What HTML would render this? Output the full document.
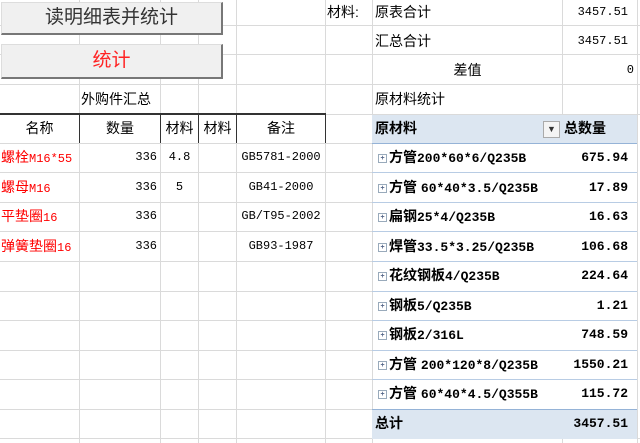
<!DOCTYPE html>
<html><head><meta charset="utf-8"><style>
body{margin:0;width:640px;height:443px;overflow:hidden;background:#fff;position:relative;font-family:"Liberation Sans","Noto Sans CJK SC",sans-serif;font-size:14px;color:#000}
.h{position:absolute;height:1px;background:#dadada}
.v{position:absolute;width:1px;background:#dadada}
.t{position:absolute;white-space:nowrap;line-height:29px;height:29px}
.m{font-family:"Liberation Mono","Noto Sans CJK SC",monospace;font-size:12px}
.p .m,.pm{font-family:"Liberation Mono",monospace;font-size:13px}
.r{color:#f00}
.btn{position:absolute;left:1px;width:219px;background:#f0f0f0;border:1px solid #ddd;border-right:2px solid #777;border-bottom:2px solid #777;text-align:center;font-size:19px}
.b{font-weight:bold}
.pl{position:absolute;left:372px;width:265px;height:1px;background:#b8cce4}
.pi{display:inline-block;width:7px;height:7px;border:1px solid #9ab;margin-right:2px;vertical-align:middle;font-size:7px;line-height:7px;text-align:center;color:#568}
</style></head><body>
<div class="h" style="top:25px;left:0;width:640px"></div>
<div class="h" style="top:54px;left:0;width:640px"></div>
<div class="h" style="top:84px;left:0;width:640px"></div>
<div class="h" style="top:114px;left:325px;width:315px"></div>
<div class="h" style="top:143px;left:0;width:372px"></div>
<div class="h" style="top:172px;left:0;width:372px"></div>
<div class="h" style="top:202px;left:0;width:372px"></div>
<div class="h" style="top:231px;left:0;width:372px"></div>
<div class="h" style="top:261px;left:0;width:372px"></div>
<div class="h" style="top:291px;left:0;width:372px"></div>
<div class="h" style="top:320px;left:0;width:372px"></div>
<div class="h" style="top:350px;left:0;width:372px"></div>
<div class="h" style="top:379px;left:0;width:372px"></div>
<div class="h" style="top:409px;left:0;width:372px"></div>
<div class="h" style="top:438px;left:0;width:640px"></div>
<div class="v" style="left:79px;top:0;height:443px"></div>
<div class="v" style="left:160px;top:0;height:443px"></div>
<div class="v" style="left:198px;top:0;height:443px"></div>
<div class="v" style="left:236px;top:0;height:443px"></div>
<div class="v" style="left:325px;top:0;height:443px"></div>
<div class="v" style="left:372px;top:0;height:443px"></div>
<div class="v" style="left:562px;top:0;height:114px"></div>
<div class="v" style="left:637px;top:0;height:443px"></div>
<div class="v" style="left:562px;top:438px;height:5px"></div>
<div style="position:absolute;top:113px;left:0;width:326px;height:2px;background:#333"></div>
<div style="position:absolute;top:114px;left:79px;width:1px;height:29px;background:#333"></div>
<div style="position:absolute;top:114px;left:160px;width:1px;height:29px;background:#333"></div>
<div style="position:absolute;top:114px;left:198px;width:1px;height:29px;background:#333"></div>
<div style="position:absolute;top:114px;left:236px;width:1px;height:29px;background:#333"></div>
<div style="position:absolute;top:114px;left:325px;width:1px;height:29px;background:#333"></div>
<div class="btn" style="top:2px;height:30px;line-height:30px;color:#333">读明细表并统计</div>
<div class="btn" style="top:44px;height:32px;line-height:32px;color:#f22">统计</div>
<div class="t" style="left:81px;top:85px">外购件汇总</div>
<div class="t" style="left:0;width:79px;top:114px;text-align:center">名称</div>
<div class="t" style="left:80px;width:80px;top:114px;text-align:center">数量</div>
<div class="t" style="left:161px;width:37px;top:114px;text-align:center">材料</div>
<div class="t" style="left:199px;width:37px;top:114px;text-align:center">材料</div>
<div class="t" style="left:237px;width:88px;top:114px;text-align:center">备注</div>
<div class="t r" style="left:1px;top:143px">螺栓<span class="m">M16*55</span></div>
<div class="t m" style="left:80px;width:77px;top:143px;text-align:right">336</div>
<div class="t m" style="left:161px;width:37px;top:143px;text-align:center">4.8</div>
<div class="t m" style="left:237px;width:88px;top:143px;text-align:center">GB5781-2000</div>
<div class="t r" style="left:1px;top:173px">螺母<span class="m">M16</span></div>
<div class="t m" style="left:80px;width:77px;top:173px;text-align:right">336</div>
<div class="t m" style="left:161px;width:37px;top:173px;text-align:center">5</div>
<div class="t m" style="left:237px;width:88px;top:173px;text-align:center">GB41-2000</div>
<div class="t r" style="left:1px;top:202px">平垫圈<span class="m">16</span></div>
<div class="t m" style="left:80px;width:77px;top:202px;text-align:right">336</div>
<div class="t m" style="left:237px;width:88px;top:202px;text-align:center">GB/T95-2002</div>
<div class="t r" style="left:1px;top:232px">弹簧垫圈<span class="m">16</span></div>
<div class="t m" style="left:80px;width:77px;top:232px;text-align:right">336</div>
<div class="t m" style="left:237px;width:88px;top:232px;text-align:center">GB93-1987</div>
<div class="t" style="left:327px;top:-2px">材料:</div>
<div class="t" style="left:375px;top:-2px">原表合计</div>
<div class="t m" style="left:562px;width:66px;top:-2px;text-align:right">3457.51</div>
<div class="t" style="left:375px;top:27px">汇总合计</div>
<div class="t m" style="left:562px;width:66px;top:27px;text-align:right">3457.51</div>
<div class="t" style="left:373px;width:189px;top:56px;text-align:center">差值</div>
<div class="t m" style="left:562px;width:72px;top:56px;text-align:right">0</div>
<div class="t" style="left:375px;top:85px">原材料统计</div>
<div style="position:absolute;left:372px;top:115px;width:265px;height:28px;background:#dce6f1;border-bottom:1px solid #95b3d7"></div>
<div class="t b" style="left:375px;top:114px">原材料</div>
<div style="position:absolute;left:543px;top:121px;width:15px;height:15px;background:#f4f4f4;border:1px solid #aaa;font-size:9px;line-height:15px;text-align:center;color:#333">▼</div>
<div class="t b" style="left:564px;top:114px">总数量</div>
<div class="pl" style="top:172px"></div><div class="pl" style="top:202px"></div><div class="pl" style="top:231px"></div><div class="pl" style="top:261px"></div><div class="pl" style="top:291px"></div><div class="pl" style="top:320px"></div><div class="pl" style="top:350px"></div><div class="pl" style="top:379px"></div>
<div style="position:absolute;left:372px;top:409px;width:265px;height:29px;background:#dce6f1;border-top:1px solid #95b3d7"></div>
<div class="t b p" style="left:378px;top:143px"><span class="pi">+</span>方管<span class="m">200*60*6/Q235B</span></div>
<div class="t b pm" style="left:560px;width:68px;top:143px;text-align:right">675.94</div>
<div class="t b p" style="left:378px;top:173px"><span class="pi">+</span>方管 <span class="m">60*40*3.5/Q235B</span></div>
<div class="t b pm" style="left:560px;width:68px;top:173px;text-align:right">17.89</div>
<div class="t b p" style="left:378px;top:202px"><span class="pi">+</span>扁钢<span class="m">25*4/Q235B</span></div>
<div class="t b pm" style="left:560px;width:68px;top:202px;text-align:right">16.63</div>
<div class="t b p" style="left:378px;top:232px"><span class="pi">+</span>焊管<span class="m">33.5*3.25/Q235B</span></div>
<div class="t b pm" style="left:560px;width:68px;top:232px;text-align:right">106.68</div>
<div class="t b p" style="left:378px;top:261px"><span class="pi">+</span>花纹钢板<span class="m">4/Q235B</span></div>
<div class="t b pm" style="left:560px;width:68px;top:261px;text-align:right">224.64</div>
<div class="t b p" style="left:378px;top:291px"><span class="pi">+</span>钢板<span class="m">5/Q235B</span></div>
<div class="t b pm" style="left:560px;width:68px;top:291px;text-align:right">1.21</div>
<div class="t b p" style="left:378px;top:320px"><span class="pi">+</span>钢板<span class="m">2/316L</span></div>
<div class="t b pm" style="left:560px;width:68px;top:320px;text-align:right">748.59</div>
<div class="t b p" style="left:378px;top:350px"><span class="pi">+</span>方管 <span class="m">200*120*8/Q235B</span></div>
<div class="t b pm" style="left:560px;width:68px;top:350px;text-align:right">1550.21</div>
<div class="t b p" style="left:378px;top:379px"><span class="pi">+</span>方管 <span class="m">60*40*4.5/Q355B</span></div>
<div class="t b pm" style="left:560px;width:68px;top:379px;text-align:right">115.72</div>
<div class="t b" style="left:375px;top:409px">总计</div>
<div class="t b pm" style="left:560px;width:68px;top:409px;text-align:right">3457.51</div>
</body></html>
